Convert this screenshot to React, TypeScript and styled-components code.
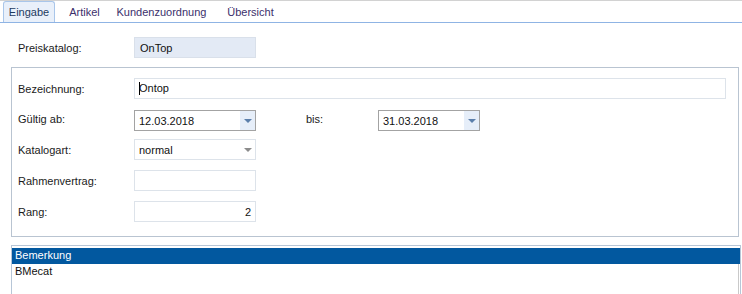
import React from 'react';
import styled, { createGlobalStyle } from 'styled-components';

const GlobalStyle = createGlobalStyle`
    html, body {
        margin: 0;
        padding: 0;
        background: #ffffff;
    }
    body {
        width: 742px;
        height: 294px;
        overflow: hidden;
        font-family: "Liberation Sans", Arial, sans-serif;
        font-size: 11px;
        color: #1b1b1b;
    }
`;

const Window = styled.div`
    display: flex;
    flex-direction: column;
    width: 742px;
    height: 294px;
    border-top: 1px solid #d2d2d2;
    box-sizing: border-box;
`;

const TabStrip = styled.div`
    display: flex;
    align-items: flex-end;
    height: 21px;
    padding-left: 3px;
    border-bottom: 1px solid #8fb4e4;
`;

const Tab = styled.div<{ $w: number; $active?: boolean }>`
    width: ${p => p.$w}px;
    height: 21px;
    box-sizing: border-box;
    display: flex;
    align-items: center;
    justify-content: center;
    padding-bottom: 1px;
    color: ${p => (p.$active ? '#1e3a5f' : '#3b2f6b')};
    background: ${p => (p.$active ? '#e9f0fa' : 'transparent')};
    border: 1px solid ${p => (p.$active ? '#a9c6ea' : 'transparent')};
    border-bottom: none;
    border-radius: 3px 3px 0 0;
`;

const Body = styled.div`
    display: flex;
    flex-direction: column;
    flex: 1;
`;

const HeaderRow = styled.div`
    display: flex;
    align-items: center;
    height: 21px;
    margin-top: 14px;
    padding-left: 18px;
`;

const Label = styled.div<{ $top?: boolean }>`
    width: 116px;
    flex-shrink: 0;
    align-self: ${p => (p.$top ? 'flex-start' : 'center')};
    margin-top: ${p => (p.$top ? '3px' : '0')};
`;

const ReadOnlyBox = styled.div`
    width: 122px;
    height: 21px;
    box-sizing: border-box;
    display: flex;
    align-items: center;
    padding-left: 5px;
    background: #e3eaf5;
    border: 1px solid #d9e0ea;
    color: #111111;
`;

const Group = styled.div`
    margin: 9px 3px 0 11px;
    padding: 10px 0 14px 6px;
    border: 1px solid #b9c4d1;
    display: flex;
    flex-direction: column;
`;

const FormRow = styled.div<{ $mt: number }>`
    display: flex;
    align-items: center;
    height: 21px;
    margin-top: ${p => p.$mt}px;
`;

const Input = styled.div<{ $w?: number; $dark?: boolean; $right?: boolean; $fill?: boolean }>`
    ${p => (p.$fill ? 'flex: 0 0 592px;' : `width: ${p.$w ?? 122}px;`)}
    height: 21px;
    box-sizing: border-box;
    display: flex;
    align-items: center;
    justify-content: ${p => (p.$right ? 'flex-end' : 'flex-start')};
    padding: 0 4px;
    background: #ffffff;
    border: 1px solid ${p => (p.$dark ? '#a3a3a3' : '#dde3ea')};
    color: #111111;
`;

const InputText = styled.span`
    flex: 1;
`;

const Caret = styled.span`
    display: inline-block;
    width: 1px;
    height: 13px;
    background: #000000;
    margin-right: -1px;
    vertical-align: middle;
`;

const DropButton = styled.div<{ $tinted?: boolean }>`
    width: 15px;
    align-self: stretch;
    margin-right: -4px;
    display: flex;
    align-items: center;
    justify-content: center;
    background: ${p => (p.$tinted ? '#e6eef9' : 'transparent')};
`;

const Arrow = styled.div<{ $color: string }>`
    width: 0;
    height: 0;
    border-left: 4px solid transparent;
    border-right: 4px solid transparent;
    border-top: 4px solid ${p => p.$color};
`;

const BisLabel = styled.div`
    width: 72px;
    margin-left: 50px;
    align-self: flex-start;
    margin-top: 3px;
`;

const List = styled.div`
    margin: 8px 1px 0 11px;
    padding-top: 2px;
    border: 1px solid #b7c6d7;
    border-bottom: none;
    flex: 1;
    display: flex;
    flex-direction: column;
`;

const ListRow = styled.div<{ $selected?: boolean }>`
    height: 16px;
    line-height: 15px;
    padding-left: 3px;
    color: ${p => (p.$selected ? '#ffffff' : '#111111')};
    background: ${p => (p.$selected ? '#02589f' : 'transparent')};
    margin-right: ${p => (p.$selected ? '0' : '1px')};
    border-right: ${p => (p.$selected ? 'none' : '1px solid #c9c9c9')};
`;

const ListRest = styled.div`
    flex: 1;
    margin-right: 1px;
    border-right: 1px solid #c9c9c9;
`;

const tabs = [
    { label: 'Eingabe', w: 52, active: true },
    { label: 'Artikel', w: 59 },
    { label: 'Kundenzuordnung', w: 95 },
    { label: 'Übersicht', w: 83 },
];

const App: React.FC = () => (
    <Window>
        <GlobalStyle />
        <TabStrip>
            {tabs.map(t => (
                <Tab key={t.label} $w={t.w} $active={t.active}>
                    {t.label}
                </Tab>
            ))}
        </TabStrip>
        <Body>
            <HeaderRow>
                <Label>Preiskatalog:</Label>
                <ReadOnlyBox>OnTop</ReadOnlyBox>
            </HeaderRow>
            <Group>
                <FormRow $mt={0}>
                    <Label>Bezeichnung:</Label>
                    <Input $fill>
                        <InputText>
                            <Caret />
                            Ontop
                        </InputText>
                    </Input>
                </FormRow>
                <FormRow $mt={11}>
                    <Label $top>Gültig ab:</Label>
                    <Input $dark>
                        <InputText>12.03.2018</InputText>
                        <DropButton $tinted>
                            <Arrow $color="#5b7fab" />
                        </DropButton>
                    </Input>
                    <BisLabel>bis:</BisLabel>
                    <Input $dark $w={102}>
                        <InputText>31.03.2018</InputText>
                        <DropButton $tinted>
                            <Arrow $color="#5b7fab" />
                        </DropButton>
                    </Input>
                </FormRow>
                <FormRow $mt={8}>
                    <Label>Katalogart:</Label>
                    <Input>
                        <InputText>normal</InputText>
                        <DropButton>
                            <Arrow $color="#8c8c8c" />
                        </DropButton>
                    </Input>
                </FormRow>
                <FormRow $mt={10}>
                    <Label>Rahmenvertrag:</Label>
                    <Input />
                </FormRow>
                <FormRow $mt={10}>
                    <Label>Rang:</Label>
                    <Input $right>2</Input>
                </FormRow>
            </Group>
            <List>
                <ListRow $selected>Bemerkung</ListRow>
                <ListRow>BMecat</ListRow>
                <ListRest />
            </List>
        </Body>
    </Window>
);

export default App;
